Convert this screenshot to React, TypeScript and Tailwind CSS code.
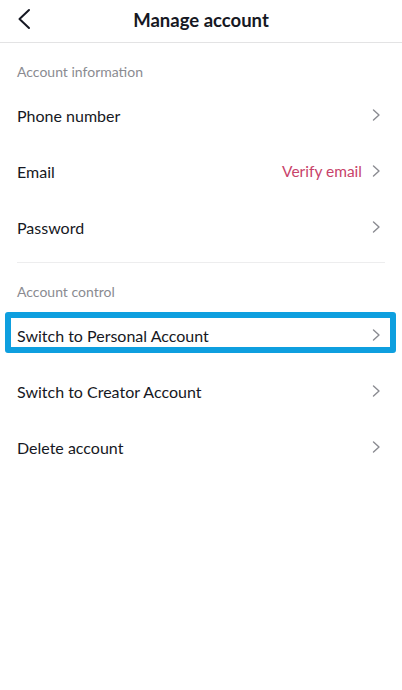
import React from 'react';

const Chevron: React.FC = () => (
  <svg className="w-[9px] h-[12px] text-[#8a8b91]" viewBox="0 0 9 12" fill="none" stroke="currentColor">
    <path d="M1.5 1 L7 6 L1.5 11" strokeWidth={1.4} strokeLinecap="round" strokeLinejoin="round" />
  </svg>
);

interface RowProps {
  label: string;
  value?: string;
  highlight?: boolean;
}

const Row: React.FC<RowProps> = ({ label, value, highlight }) => (
  <div className="relative flex items-center h-[56px] pl-[17px] pr-[21px]">
    <span className="flex-1 text-[16px] text-[#161823] pt-[1px]">{label}</span>
    {value && <span className="mr-[10px] text-[15.5px] text-[#c8436a] pt-[1px]">{value}</span>}
    <Chevron />
    {highlight && (
      <div className="absolute left-[5px] right-[6px] top-[5px] bottom-[10px] border-[6px] border-[#0e9fdf] rounded-[3px] pointer-events-none" />
    )}
  </div>
);

const SectionLabel: React.FC<{ text: string }> = ({ text }) => (
  <div className="h-[44px] flex items-end pb-[5px] pl-[17px] text-[14px] text-[#8a8b91]">{text}</div>
);

const App: React.FC = () => {
  return (
    <div className="w-[402px] h-[690px] bg-white font-['Lato',sans-serif] overflow-hidden">
      <div className="relative h-[43px] flex items-center justify-center border-b border-[#e3e3e4]">
        <button className="absolute left-[16px] top-[8px] p-0">
          <svg className="w-[16px] h-[22px] text-[#161823]" viewBox="0 0 16 22" fill="none" stroke="currentColor">
            <path d="M13 2 L3.5 11 L13 20" strokeWidth={2} strokeLinecap="round" strokeLinejoin="round" />
          </svg>
        </button>
        <h1 className="text-[18.5px] font-bold text-[#161823]">Manage account</h1>
      </div>

      <SectionLabel text="Account information" />
      <Row label="Phone number" />
      <Row label="Email" value="Verify email" />
      <Row label="Password" />

      <div className="h-[7px]" />
      <div className="mx-[17px] h-px bg-[#ededee]" />

      <SectionLabel text="Account control" />
      <Row label="Switch to Personal Account" highlight />
      <Row label="Switch to Creator Account" />
      <Row label="Delete account" />
    </div>
  );
};

export default App;
